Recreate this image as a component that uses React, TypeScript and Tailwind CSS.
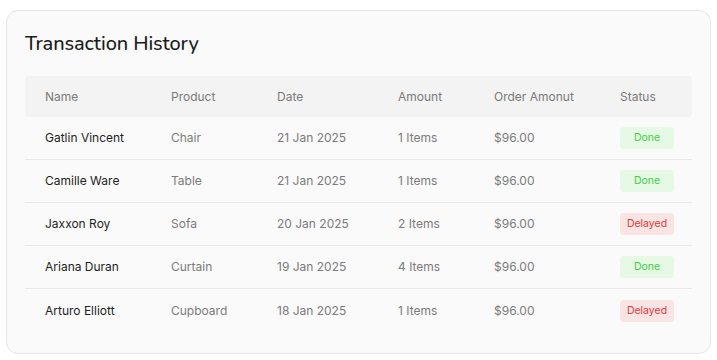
import React from "react";

const rows = [
  { name: "Gatlin Vincent", product: "Chair", date: "21 Jan 2025", amount: "1 Items", order: "$96.00", status: "Done" },
  { name: "Camille Ware", product: "Table", date: "21 Jan 2025", amount: "1 Items", order: "$96.00", status: "Done" },
  { name: "Jaxxon Roy", product: "Sofa", date: "20 Jan 2025", amount: "2 Items", order: "$96.00", status: "Delayed" },
  { name: "Ariana Duran", product: "Curtain", date: "19 Jan 2025", amount: "4 Items", order: "$96.00", status: "Done" },
  { name: "Arturo Elliott", product: "Cupboard", date: "18 Jan 2025", amount: "1 Items", order: "$96.00", status: "Delayed" },
];

const cols = "grid grid-cols-[126px_106px_121px_96px_126px_1fr]";

export default function App() {
  return (
    <div className="w-[717px] h-[360px] bg-white pt-[10px] px-[6px]" style={{ fontFamily: "Inter, 'Noto Sans', sans-serif" }}>
      <div className="h-[344px] rounded-[12px] border border-[#e6e6e6] bg-[#fafafa] px-[18px] pt-[20px]">
        <h1 className="text-[20px] leading-[26px] font-medium text-[#1a1a1a] tracking-[-0.1px]" style={{ fontFamily: "'Nunito', 'Noto Sans', Inter, sans-serif" }}>
          Transaction History
        </h1>
        <div className="mt-[19px]">
          <div className={`${cols} h-[41px] items-center bg-[#f3f3f3] rounded-[4px] text-[12px] text-[#7a7a7a]`}>
            <div className="pl-5">Name</div>
            <div className="pl-5">Product</div>
            <div className="pl-5">Date</div>
            <div className="pl-5">Amount</div>
            <div className="pl-5">Order Amonut</div>
            <div className="pl-5">Status</div>
          </div>
          {rows.map((r, i) => (
            <div
              key={r.name}
              className={`${cols} h-[43px] items-center text-[12px] text-[#7a7a7a] ${i < rows.length - 1 ? "border-b border-[#e8e8e8]" : ""}`}
            >
              <div className="pl-5 text-[#1e1e1e]">{r.name}</div>
              <div className="pl-5">{r.product}</div>
              <div className="pl-5">{r.date}</div>
              <div className="pl-5">{r.amount}</div>
              <div className="pl-5">{r.order}</div>
              <div className="pl-5">
                {r.status === "Done" ? (
                  <span className="inline-flex w-[54px] h-[22px] items-center justify-center rounded-[4px] bg-[#e5f9e5] text-[10.5px] text-[#3fcf3f]">
                    Done
                  </span>
                ) : (
                  <span className="inline-flex w-[54px] h-[22px] items-center justify-center rounded-[4px] bg-[#fbe4e4] text-[10.5px] text-[#e03b3b]">
                    Delayed
                  </span>
                )}
              </div>
            </div>
          ))}
        </div>
      </div>
    </div>
  );
}
